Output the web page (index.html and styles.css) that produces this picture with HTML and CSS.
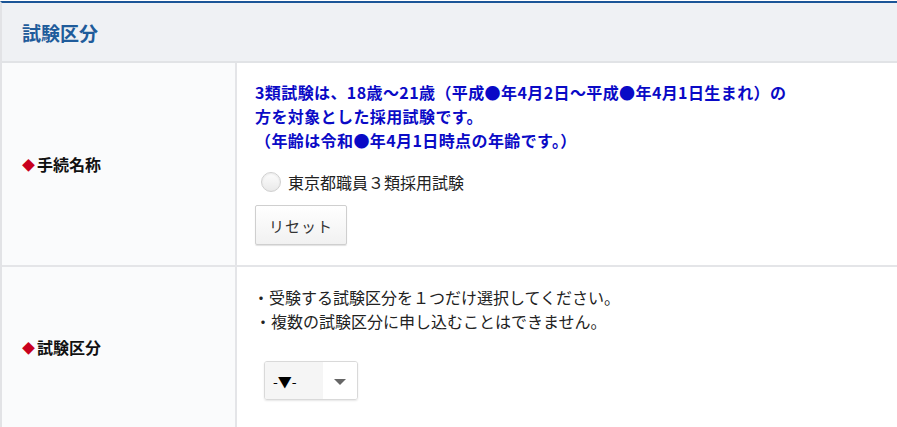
FILE: index.html
```html
<!DOCTYPE html>
<html lang="ja">
<head>
<meta charset="utf-8">
<link rel="stylesheet" href="styles.css">
</head>
<body>
<div class="panel">
  <div class="panel-head">
    <h2 class="panel-title">試験区分</h2>
  </div>
  <div class="form-grid">
    <div class="label-cell label-first"><span class="mark">◆</span>手続名称</div>
    <div class="field-cell field-first">
      <p class="notice">3類試験は、18歳～21歳（平成●年4月2日～平成●年4月1日生まれ）の<br>方を対象とした採用試験です。<br>（年齢は令和●年4月1日時点の年齢です。）</p>
      <label class="radio-row"><span class="radio"></span><span class="radio-text">東京都職員３類採用試験</span></label>
      <button class="reset-btn" type="button">リセット</button>
    </div>
    <div class="label-cell"><span class="mark">◆</span>試験区分</div>
    <div class="field-cell field-second">
      <p class="bullets">・受験する試験区分を１つだけ選択してください。<br>・複数の試験区分に申し込むことはできません。</p>
      <div class="select">
        <span class="select-value">-▼-</span>
        <span class="select-arrow"></span>
      </div>
    </div>
  </div>
</div>
</body>
</html>
```
FILE: styles.css
```css
html, body {
  margin: 0;
  padding: 0;
  background: #fff;
}
body {
  font-family: "Noto Sans CJK JP", "Noto Sans", sans-serif;
  color: #222;
  padding-top: 1px;
}
.panel {
  border-top: 2px solid #1b5597;
  border-left: 2px solid #e2e3e6;
  min-height: 440px;
}
.panel-head {
  background: #eff1f4;
  border-bottom: 2px solid #e1e3e6;
  height: 58px;
  display: flex;
  align-items: center;
  padding-left: 20px;
}
.panel-title {
  margin: 0;
  font-size: 19px;
  font-weight: bold;
  color: #1f5c9b;
  line-height: 1;
}
.form-grid {
  display: grid;
  grid-template-columns: 235px 1fr;
}
.label-cell {
  background: #fafbfc;
  border-right: 2px solid #e4e5e8;
  display: flex;
  align-items: center;
  padding-left: 20px;
  font-size: 16px;
  font-weight: bold;
  color: #111;
  line-height: 24px;
}
.label-first, .field-first {
  border-bottom: 2px solid #e4e5e8;
}
.mark {
  color: #c8001e;
  font-size: 13px;
  margin-right: 2px;
  position: relative;
  top: 1px;
}
.field-cell {
  padding-left: 18px;
}
.field-first {
  padding-top: 17px;
  padding-bottom: 20px;
}
.field-second {
  padding-top: 18px;
  padding-bottom: 27px;
}
.notice {
  margin: 0;
  font-size: 16px;
  font-weight: bold;
  line-height: 24px;
  color: #0a0ac6;
  white-space: nowrap;
  letter-spacing: 0.4px;
}
.radio-row {
  display: flex;
  align-items: center;
  margin-top: 18px;
  height: 24px;
  padding-left: 6px;
}
.radio {
  width: 18px;
  height: 18px;
  border-radius: 50%;
  border: 1px solid #d0d0d0;
  background: linear-gradient(#fdfdfd, #e9e9e9);
  box-shadow: inset 0 1px 2px rgba(0,0,0,0.08);
  margin-right: 7px;
}
.radio-text {
  font-size: 16px;
  color: #222;
}
.reset-btn {
  display: block;
  margin-top: 11px;
  width: 92px;
  height: 40px;
  border: 1px solid #cfcfcf;
  border-radius: 2px;
  background: linear-gradient(#ffffff, #f1f1f1);
  box-shadow: 0 1px 1px rgba(0,0,0,0.12);
  font-family: inherit;
  font-size: 15px;
  color: #333;
  letter-spacing: 1px;
  padding: 0;
}
.bullets {
  margin: 0;
  font-size: 16px;
  line-height: 24px;
  color: #222;
  text-indent: -2px;
}
.select {
  display: flex;
  margin-top: 28px;
  margin-left: 9px;
  width: 92px;
  height: 37px;
  border: 1px solid #d9d9d9;
  border-radius: 3px;
  box-shadow: 0 1px 2px rgba(0,0,0,0.1);
  overflow: hidden;
}
.select-value {
  flex: 1;
  background: #f5f5f5;
  display: flex;
  align-items: center;
  padding-left: 8px;
  font-size: 14px;
  color: #000;
}
.select-arrow {
  width: 34px;
  background: #fff;
  display: flex;
  align-items: center;
  justify-content: center;
}
.select-arrow::after {
  content: "";
  border-left: 6px solid transparent;
  border-right: 6px solid transparent;
  border-top: 6px solid #666;
  margin-top: 2px;
}
```
